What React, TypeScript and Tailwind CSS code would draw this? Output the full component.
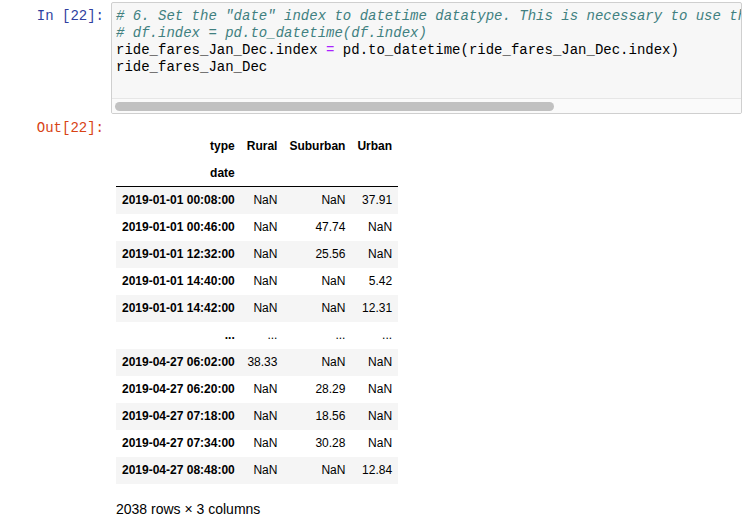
import React from 'react';

type Row = { date: string; rural: string; suburban: string; urban: string };

const ROWS: Row[] = [
  { date: '2019-01-01 00:08:00', rural: 'NaN', suburban: 'NaN', urban: '37.91' },
  { date: '2019-01-01 00:46:00', rural: 'NaN', suburban: '47.74', urban: 'NaN' },
  { date: '2019-01-01 12:32:00', rural: 'NaN', suburban: '25.56', urban: 'NaN' },
  { date: '2019-01-01 14:40:00', rural: 'NaN', suburban: 'NaN', urban: '5.42' },
  { date: '2019-01-01 14:42:00', rural: 'NaN', suburban: 'NaN', urban: '12.31' },
  { date: '...', rural: '...', suburban: '...', urban: '...' },
  { date: '2019-04-27 06:02:00', rural: '38.33', suburban: 'NaN', urban: 'NaN' },
  { date: '2019-04-27 06:20:00', rural: 'NaN', suburban: '28.29', urban: 'NaN' },
  { date: '2019-04-27 07:18:00', rural: 'NaN', suburban: '18.56', urban: 'NaN' },
  { date: '2019-04-27 07:34:00', rural: 'NaN', suburban: '30.28', urban: 'NaN' },
  { date: '2019-04-27 08:48:00', rural: 'NaN', suburban: 'NaN', urban: '12.84' },
];

const mono = "font-['Liberation_Mono',monospace]";
const sans = "font-['Liberation_Sans',Arial,sans-serif]";

export default function App() {
  return (
    <div className="w-[755px] h-[523px] bg-white overflow-hidden">
      {/* Input cell */}
      <div className="flex pt-[2px]">
        <div className={`w-[110px] shrink-0 text-right pr-[6px] pt-[6px] text-[14px] leading-[17px] text-[#303F9F] ${mono}`}>
          In&nbsp;[22]:
        </div>
        <div className="w-[631px] ml-[1px] border border-[#cfcfcf] rounded-[2px] bg-[#f7f7f7] overflow-hidden">
          <div className={`h-[95px] pt-[5px] px-[4px] text-[14px] leading-[17px] text-black whitespace-pre ${mono}`}>
            <div className="italic text-[#408080]">
              # 6. Set the "date" index to datetime datatype. This is necessary to use the resample() method in Step 8.
            </div>
            <div className="italic text-[#408080]"># df.index = pd.to_datetime(df.index)</div>
            <div>
              ride_fares_Jan_Dec.index <span className="text-[#AA22FF]">=</span> pd.to_datetime(ride_fares_Jan_Dec.index)
            </div>
            <div>ride_fares_Jan_Dec</div>
          </div>
          {/* horizontal scrollbar */}
          <div className="h-[15px] border-t border-[#e6e6e6] bg-[#fafafa] pt-[3px] pl-[3px]">
            <div className="w-[439px] h-[9px] rounded-full bg-[#c1c1c1]" />
          </div>
        </div>
      </div>

      {/* Output cell */}
      <div className="flex">
        <div className={`w-[110px] shrink-0 text-right pr-[6px] pt-[6px] text-[14px] leading-[17px] text-[#D84315] ${mono}`}>
          Out[22]:
        </div>
        <div className={`pl-[6px] pt-[19px] text-black ${sans}`}>
          <table className="border-collapse text-[12px] leading-[14px] whitespace-nowrap">
            <thead className="border-b border-black">
              <tr className="h-[26.8px]">
                <th className="px-[6px] text-right font-bold">type</th>
                <th className="px-[6px] text-right font-bold">Rural</th>
                <th className="px-[6px] text-right font-bold">Suburban</th>
                <th className="px-[6px] text-right font-bold">Urban</th>
              </tr>
              <tr className="h-[26.8px]">
                <th className="px-[6px] text-right font-bold">date</th>
                <th className="px-[6px]" />
                <th className="px-[6px]" />
                <th className="px-[6px]" />
              </tr>
            </thead>
            <tbody>
              {ROWS.map((r, i) => (
                <tr key={i} className={`h-[27px] ${i % 2 === 0 ? 'bg-[#f5f5f5]' : 'bg-white'}`}>
                  <th className="px-[6px] text-right font-bold">{r.date}</th>
                  <td className="px-[6px] text-right">{r.rural}</td>
                  <td className="px-[6px] text-right">{r.suburban}</td>
                  <td className="px-[6px] text-right">{r.urban}</td>
                </tr>
              ))}
            </tbody>
          </table>
          <p className="mt-[17px] text-[14px] leading-[17px]">2038 rows × 3 columns</p>
        </div>
      </div>
    </div>
  );
}
